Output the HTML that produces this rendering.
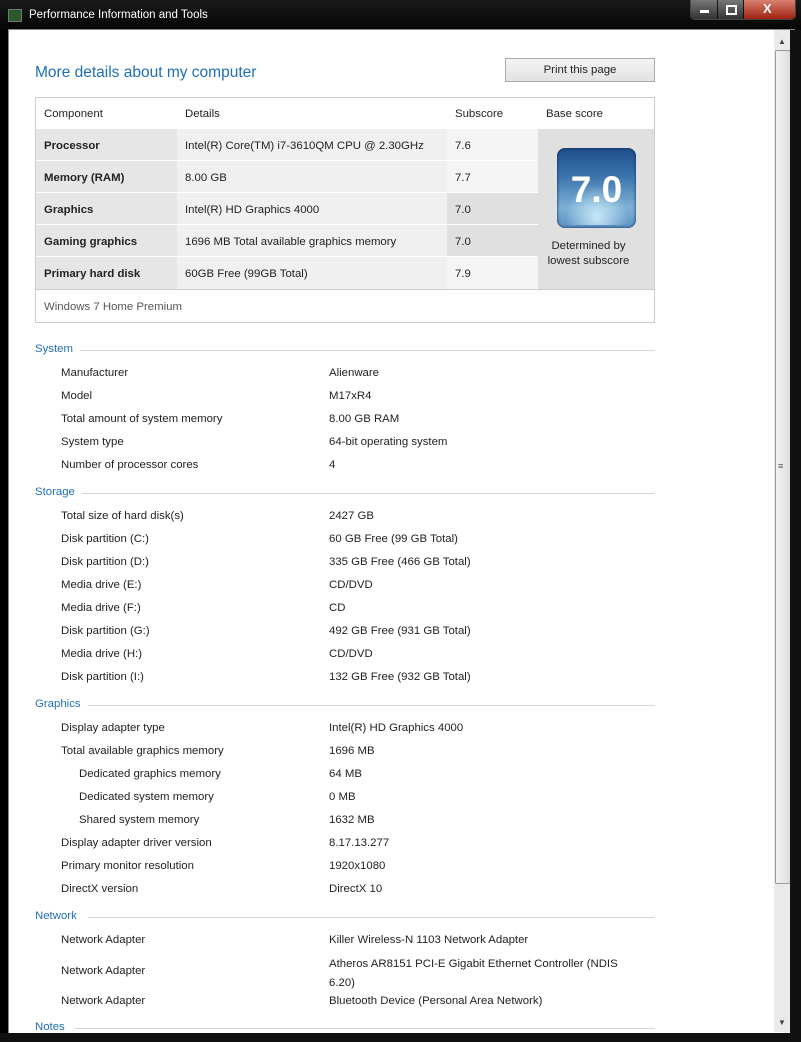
<!DOCTYPE html>
<html><head><meta charset="utf-8"><style>
body{margin:0;width:801px;height:1042px;background:#000;position:relative;overflow:hidden;font-family:"Liberation Sans",sans-serif;font-size:11.4px;color:#222}
.a{position:absolute;white-space:nowrap;line-height:16px}
.h{color:#1e6fb5}
.ln{position:absolute;height:1px;background:#d5d5d5}
.c{position:absolute}
</style></head><body>
<div class="c" style="left:0;top:0;width:801px;height:30px;background:linear-gradient(#1a1a1a,#050505)"></div>
<div class="c" style="left:8px;top:9px;width:12px;height:11px;background:#2a5a2a;border:1px solid #777"></div>
<div class="a" style="left:29px;top:7px;color:#fff;font-size:11.5px">Performance Information and Tools</div>
<div class="c" style="left:690px;top:0;width:104px;height:19px;border-radius:0 0 5px 5px;overflow:hidden;border:1px solid #444;border-top:none">
<div class="c" style="left:0;top:0;width:26px;height:19px;background:linear-gradient(#777,#333)"></div>
<div class="c" style="left:9px;top:10px;width:9px;height:3px;background:#fff"></div>
<div class="c" style="left:27px;top:0;width:25px;height:19px;background:linear-gradient(#777,#333)"></div>
<div class="c" style="left:35px;top:5px;width:7px;height:6px;border:2px solid #fff"></div>
<div class="c" style="left:53px;top:0;width:51px;height:19px;background:linear-gradient(#d88070,#a02010)"></div>
<div class="a" style="left:72px;top:1px;color:#fff;font-weight:bold;font-size:13px">X</div>
</div>
<div class="c" style="left:8px;top:29px;width:785px;height:1004px;background:#fff;border:1px solid #888"></div>
<div class="c" style="left:774px;top:30px;width:16px;height:1002px;background:#eaeaea"></div>
<div class="c" style="left:775px;top:50px;width:14px;height:832px;background:linear-gradient(90deg,#f4f4f4,#dcdcdc);border:1px solid #999;border-radius:2px"></div>
<div class="a" style="left:778px;top:34px;font-size:8px;color:#444">▲</div>
<div class="a" style="left:778px;top:1015px;font-size:8px;color:#444">▼</div>
<div class="a" style="left:778px;top:458px;font-size:9px;color:#555">≡</div>

<div class="a h" style="left:35px;top:63px;font-size:15.5px;line-height:20px">More details about my computer</div>
<div class="c" style="left:505px;top:58px;width:148px;height:22px;background:linear-gradient(#f5f5f5,#e2e2e2);border:1px solid #aaa"></div>
<div class="a" style="left:505px;top:62px;width:150px;text-align:center">Print this page</div>

<div class="c" style="left:35px;top:97px;width:618px;height:224px;border:1px solid #ccc;background:#fff"></div>
<div class="a" style="left:44px;top:106px">Component</div>
<div class="a" style="left:185px;top:106px">Details</div>
<div class="a" style="left:455px;top:106px">Subscore</div>
<div class="a" style="left:546px;top:106px">Base score</div>
<div class="c" style="left:538px;top:129px;width:116px;height:161px;background:#e0e0e0"></div>
<div class="c" style="left:557px;top:148px;width:79px;height:80px;border-radius:8px;background:linear-gradient(#1f4f8a 0%,#3b74ad 35%,#7fb0d6 75%,#5b93c4 100%);box-shadow:inset 0 0 3px #0a2a55"></div>
<div class="c" style="left:565px;top:185px;width:64px;height:40px;border-radius:50% 50% 6px 6px;background:radial-gradient(ellipse at 50% 80%,#c8e8f6,rgba(160,210,235,0) 70%)"></div>
<div class="a" style="left:557px;top:170px;width:79px;text-align:center;color:#fff;font-size:37px;line-height:40px;font-weight:bold">7.0</div>
<div class="a" style="left:538px;top:238px;width:101px;text-align:center">Determined by</div>
<div class="a" style="left:538px;top:253px;width:101px;text-align:center">lowest subscore</div>

<div class="c" style="left:36px;top:129px;width:141px;height:31px;background:#e6e6e6"></div><div class="c" style="left:177px;top:129px;width:270px;height:31px;background:#f0f0f0"></div><div class="c" style="left:447px;top:129px;width:91px;height:31px;background:#f5f5f5"></div>
<div class="c" style="left:36px;top:161px;width:141px;height:31px;background:#e6e6e6"></div><div class="c" style="left:177px;top:161px;width:270px;height:31px;background:#f0f0f0"></div><div class="c" style="left:447px;top:161px;width:91px;height:31px;background:#f5f5f5"></div>
<div class="c" style="left:36px;top:193px;width:141px;height:31px;background:#e6e6e6"></div><div class="c" style="left:177px;top:193px;width:270px;height:31px;background:#f0f0f0"></div><div class="c" style="left:447px;top:193px;width:91px;height:31px;background:#e0e0e0"></div>
<div class="c" style="left:36px;top:225px;width:141px;height:31px;background:#e6e6e6"></div><div class="c" style="left:177px;top:225px;width:270px;height:31px;background:#f0f0f0"></div><div class="c" style="left:447px;top:225px;width:91px;height:31px;background:#e0e0e0"></div>
<div class="c" style="left:36px;top:257px;width:141px;height:32px;background:#e6e6e6"></div><div class="c" style="left:177px;top:257px;width:270px;height:32px;background:#f0f0f0"></div><div class="c" style="left:447px;top:257px;width:91px;height:32px;background:#f5f5f5"></div>
<div class="c" style="left:36px;top:289px;width:618px;height:1px;background:#ccc"></div>

<div class="a" style="left:44px;top:138px;font-weight:bold">Processor</div><div class="a" style="left:185px;top:138px">Intel(R) Core(TM) i7-3610QM CPU @ 2.30GHz</div><div class="a" style="left:455px;top:138px">7.6</div>
<div class="a" style="left:44px;top:170px;font-weight:bold">Memory (RAM)</div><div class="a" style="left:185px;top:170px">8.00 GB</div><div class="a" style="left:455px;top:170px">7.7</div>
<div class="a" style="left:44px;top:202px;font-weight:bold">Graphics</div><div class="a" style="left:185px;top:202px">Intel(R) HD Graphics 4000</div><div class="a" style="left:455px;top:202px">7.0</div>
<div class="a" style="left:44px;top:234px;font-weight:bold">Gaming graphics</div><div class="a" style="left:185px;top:234px">1696 MB Total available graphics memory</div><div class="a" style="left:455px;top:234px">7.0</div>
<div class="a" style="left:44px;top:266px;font-weight:bold">Primary hard disk</div><div class="a" style="left:185px;top:266px">60GB Free (99GB Total)</div><div class="a" style="left:455px;top:266px">7.9</div>
<div class="a" style="left:44px;top:299px;color:#555">Windows 7 Home Premium</div>

<div class="a h" style="left:35px;top:341px">System</div><div class="ln" style="left:80px;top:350px;width:575px"></div>
<div class="a" style="left:61px;top:365px">Manufacturer</div><div class="a" style="left:329px;top:365px">Alienware</div>
<div class="a" style="left:61px;top:388px">Model</div><div class="a" style="left:329px;top:388px">M17xR4</div>
<div class="a" style="left:61px;top:411px">Total amount of system memory</div><div class="a" style="left:329px;top:411px">8.00 GB RAM</div>
<div class="a" style="left:61px;top:434px">System type</div><div class="a" style="left:329px;top:434px">64-bit operating system</div>
<div class="a" style="left:61px;top:457px">Number of processor cores</div><div class="a" style="left:329px;top:457px">4</div>

<div class="a h" style="left:35px;top:484px">Storage</div><div class="ln" style="left:82px;top:493px;width:573px"></div>
<div class="a" style="left:61px;top:508px">Total size of hard disk(s)</div><div class="a" style="left:329px;top:508px">2427 GB</div>
<div class="a" style="left:61px;top:531px">Disk partition (C:)</div><div class="a" style="left:329px;top:531px">60 GB Free (99 GB Total)</div>
<div class="a" style="left:61px;top:554px">Disk partition (D:)</div><div class="a" style="left:329px;top:554px">335 GB Free (466 GB Total)</div>
<div class="a" style="left:61px;top:577px">Media drive (E:)</div><div class="a" style="left:329px;top:577px">CD/DVD</div>
<div class="a" style="left:61px;top:600px">Media drive (F:)</div><div class="a" style="left:329px;top:600px">CD</div>
<div class="a" style="left:61px;top:623px">Disk partition (G:)</div><div class="a" style="left:329px;top:623px">492 GB Free (931 GB Total)</div>
<div class="a" style="left:61px;top:646px">Media drive (H:)</div><div class="a" style="left:329px;top:646px">CD/DVD</div>
<div class="a" style="left:61px;top:669px">Disk partition (I:)</div><div class="a" style="left:329px;top:669px">132 GB Free (932 GB Total)</div>

<div class="a h" style="left:35px;top:696px">Graphics</div><div class="ln" style="left:88px;top:705px;width:567px"></div>
<div class="a" style="left:61px;top:720px">Display adapter type</div><div class="a" style="left:329px;top:720px">Intel(R) HD Graphics 4000</div>
<div class="a" style="left:61px;top:743px">Total available graphics memory</div><div class="a" style="left:329px;top:743px">1696 MB</div>
<div class="a" style="left:79px;top:766px">Dedicated graphics memory</div><div class="a" style="left:329px;top:766px">64 MB</div>
<div class="a" style="left:79px;top:789px">Dedicated system memory</div><div class="a" style="left:329px;top:789px">0 MB</div>
<div class="a" style="left:79px;top:812px">Shared system memory</div><div class="a" style="left:329px;top:812px">1632 MB</div>
<div class="a" style="left:61px;top:835px">Display adapter driver version</div><div class="a" style="left:329px;top:835px">8.17.13.277</div>
<div class="a" style="left:61px;top:858px">Primary monitor resolution</div><div class="a" style="left:329px;top:858px">1920x1080</div>
<div class="a" style="left:61px;top:881px">DirectX version</div><div class="a" style="left:329px;top:881px">DirectX 10</div>

<div class="a h" style="left:35px;top:908px">Network</div><div class="ln" style="left:88px;top:917px;width:567px"></div>
<div class="a" style="left:61px;top:932px">Network Adapter</div><div class="a" style="left:329px;top:932px">Killer Wireless-N 1103 Network Adapter</div>
<div class="a" style="left:61px;top:963px">Network Adapter</div><div class="a" style="left:329px;top:956px">Atheros AR8151 PCI-E Gigabit Ethernet Controller (NDIS</div><div class="a" style="left:329px;top:975px">6.20)</div>
<div class="a" style="left:61px;top:993px">Network Adapter</div><div class="a" style="left:329px;top:993px">Bluetooth Device (Personal Area Network)</div>
<div class="a h" style="left:35px;top:1019px">Notes</div><div class="ln" style="left:75px;top:1028px;width:580px"></div>
<div class="c" style="left:0;top:1033px;width:801px;height:9px;background:#111"></div>
<div class="c" style="left:790px;top:30px;width:11px;height:1012px;background:#111"></div>
</body></html>
